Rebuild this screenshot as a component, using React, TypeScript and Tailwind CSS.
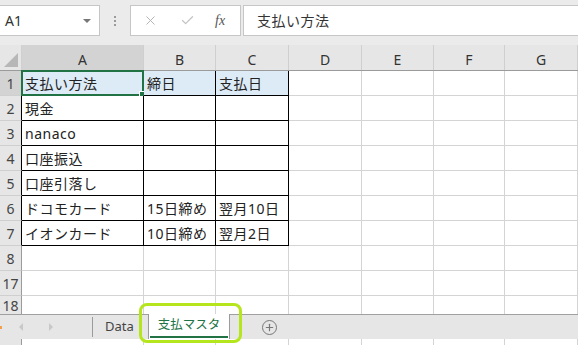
import { Check, Plus, X } from "lucide-react";

const FONT = { fontFamily: "'Noto Sans','Noto Sans CJK JP',sans-serif" };

const COLS = ["A", "B", "C", "D", "E", "F", "G"];
const WIDTHS = ["w-[122px]", "w-[72px]", "w-[73px]", "w-[73px]", "w-[72px]", "w-[71px]", "w-[73px]"];

const DATA: string[][] = [
  ["支払い方法", "締日", "支払日"],
  ["現金", "", ""],
  ["nanaco", "", ""],
  ["口座振込", "", ""],
  ["口座引落し", "", ""],
  ["ドコモカード", "15日締め", "翌月10日"],
  ["イオンカード", "10日締め", "翌月2日"],
];

const ROWS = ["1", "2", "3", "4", "5", "6", "7", "8", "17", "18"];

/* ─── FORMULA BAR ─────────────────────────────────────────── */
function FormulaBar() {
  return (
    <div className="h-[45px] flex items-start pt-[5px] bg-[#ebebeb]">
      <div className="w-[100px] h-[31px] bg-white border border-l-0 border-[#c6c6c6] flex items-center justify-between pl-[5px] pr-[8px]">
        <span className="text-[14px] text-[#333]">A1</span>
        <span className="w-0 h-0 border-l-[4px] border-r-[4px] border-t-[4px] border-l-transparent border-r-transparent border-t-[#777]" />
      </div>
      <div className="w-[30px] h-[31px] flex flex-col items-center justify-center gap-[2px]">
        <span className="w-[2px] h-[2px] bg-[#9a9a9a]" />
        <span className="w-[2px] h-[2px] bg-[#9a9a9a]" />
        <span className="w-[2px] h-[2px] bg-[#9a9a9a]" />
      </div>
      <div className="w-[111px] h-[31px] bg-white border border-[#c6c6c6] flex items-center pl-[12px]">
        <X size={15} strokeWidth={1.5} className="text-[#b0b0b0]" />
        <Check size={15} strokeWidth={2} className="text-[#c4c4c4] ml-[22px]" />
        <span className="ml-[20px] text-[14px] italic text-[#555]" style={{ fontFamily: "'Liberation Serif',serif" }}>
          fx
        </span>
      </div>
      <div className="ml-[2px] flex-1 h-[31px] bg-white border border-r-0 border-[#c6c6c6] flex items-center pl-[13px]">
        <span className="text-[14px] text-[#333] tracking-[0.5px]">支払い方法</span>
      </div>
    </div>
  );
}

/* ─── HEADER ROW ──────────────────────────────────────────── */
function HeaderRow() {
  return (
    <div className="flex h-[26px] border-b border-[#9b9b9b] bg-[#e6e6e6]">
      <div className="w-[22px] border-r border-[#cfcfcf] relative">
        <svg className="absolute right-[3px] bottom-[3px]" width="14" height="14" viewBox="0 0 14 14">
          <polygon points="14,0 14,14 0,14" fill="#b7b7b7" />
        </svg>
      </div>
      {COLS.map((c, i) => (
        <div
          key={c}
          className={`${WIDTHS[i]} border-r border-[#cfcfcf] flex items-center justify-center text-[14px] text-[#333] pt-[3px] ${
            i === 0 ? "bg-[#d3d3d3]" : ""
          }`}
        >
          {c}
        </div>
      ))}
    </div>
  );
}

/* ─── BODY ROW ────────────────────────────────────────────── */
function BodyRow({ label, index, short }: { label: string; index: number; short?: boolean }) {
  const inTable = index < 7;
  const values = inTable ? DATA[index] : [];
  return (
    <div className={`flex ${short ? "h-[18px]" : "h-[25px]"}`}>
      <div
        className={`w-[22px] border-r flex items-center justify-center text-[14px] text-[#444] ${
          short ? "" : "border-b"
        } ${index === 0 ? "bg-[#d3d3d3]" : "bg-[#e6e6e6]"} ${
          inTable ? "border-r-black" : "border-r-[#9b9b9b]"
        } border-b-[#cfcfcf] overflow-hidden`}
      >
        {label}
      </div>
      {COLS.map((c, i) => {
        const tableCell = inTable && i < 3;
        return (
          <div
            key={c}
            className={`${WIDTHS[i]} border-r ${short ? "" : "border-b"} flex items-center pl-[3px] text-[14px] tracking-[0.5px] text-[#222] whitespace-nowrap relative ${
              tableCell ? "border-r-black border-b-black" : "border-r-[#d4d4d4] border-b-[#d4d4d4]"
            } ${index === 0 && i < 3 ? "bg-[#ddebf7]" : "bg-white"}`}
          >
            {tableCell ? values[i] : ""}
            {index === 0 && i === 0 && (
              <>
                <span className="absolute -left-[1px] -top-[1px] w-[123px] h-[26px] border-2 border-[#217346]" />
                <span className="absolute -right-[3px] -bottom-[3px] w-[5px] h-[5px] bg-[#217346] border border-white box-content" />
              </>
            )}
          </div>
        );
      })}
    </div>
  );
}

/* ─── SHEET TABS ──────────────────────────────────────────── */
function SheetTabs() {
  return (
    <div className="relative">
      <div className="h-[25px] bg-[#e6e6e6] border-t border-[#a0a0a0] flex items-stretch">
        <div className="w-[92px] flex items-center relative">
          <span className="absolute left-0 top-[11px] w-[2px] h-[3px] bg-[#f0a050]" />
          <span className="ml-[19px] w-0 h-0 border-t-[4px] border-b-[4px] border-r-[4px] border-t-transparent border-b-transparent border-r-[#c8c8c8]" />
          <span className="ml-[26px] w-0 h-0 border-t-[4px] border-b-[4px] border-l-[4px] border-t-transparent border-b-transparent border-l-[#c8c8c8]" />
        </div>
        <div className="w-[56px] border-l border-[#9b9b9b] my-[2px] flex items-center pl-[12px] text-[13px] text-[#444]">Data</div>
        <div className="w-[82px] -mt-[1px] bg-white border-l border-r border-[#9b9b9b] flex flex-col">
          <div className="flex-1 flex items-center justify-center text-[12.5px] text-[#217346]">支払マスタ</div>
          <div className="h-[2px] bg-[#217346] mx-[1px] mb-[1px]" />
        </div>
        <div className="ml-[32px] flex items-center">
          <span className="w-[15px] h-[15px] rounded-full border border-[#777] flex items-center justify-center">
            <Plus size={11} strokeWidth={2.5} className="text-[#777]" />
          </span>
        </div>
      </div>
      <span className="absolute left-[139px] -top-[11px] w-[103px] h-[40px] border-[3px] border-[#b5e61d] rounded-[8px] pointer-events-none" />
    </div>
  );
}

/* ─── STRIP BELOW TABS ────────────────────────────────────── */
function BottomStrip() {
  return (
    <div className="flex h-[6px] bg-white">
      <div className="w-[22px] border-r border-[#9b9b9b] bg-[#e6e6e6]" />
      {COLS.map((c, i) => (
        <div key={c} className={`${WIDTHS[i]} border-r border-[#d4d4d4]`} />
      ))}
    </div>
  );
}

export default function App() {
  return (
    <div className="w-[578px] h-[345px] overflow-hidden bg-[#ebebeb]" style={FONT}>
      <FormulaBar />
      <HeaderRow />
      {ROWS.slice(0, 9).map((r, i) => (
        <BodyRow key={r} label={r} index={i} />
      ))}
      <BodyRow label={ROWS[9]} index={9} short />
      <SheetTabs />
      <BottomStrip />
    </div>
  );
}
